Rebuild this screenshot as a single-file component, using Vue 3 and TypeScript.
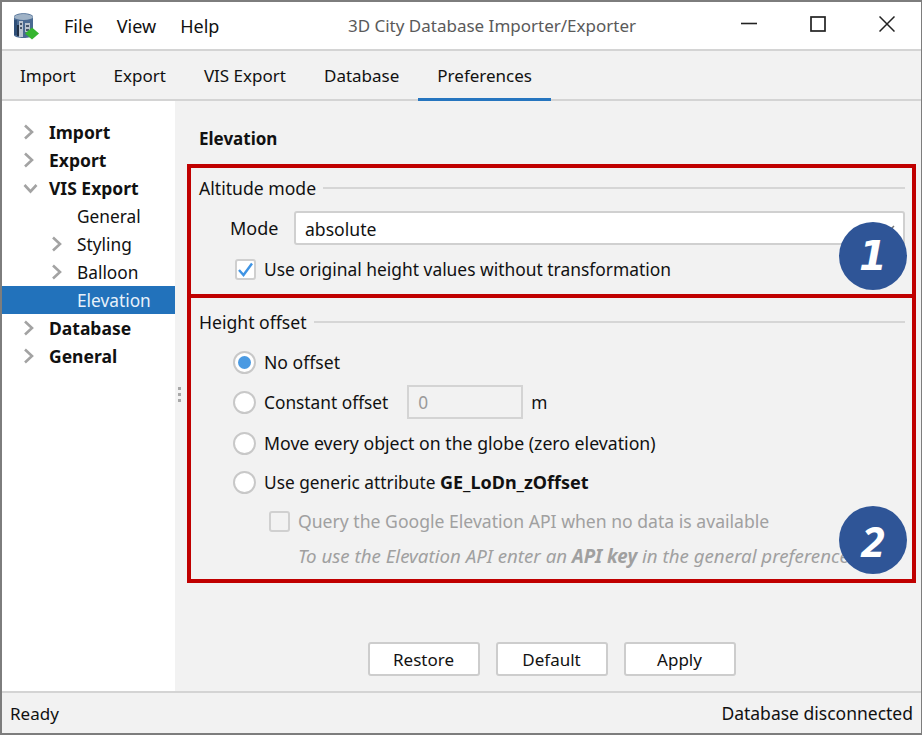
<script setup lang="ts">
interface TreeItem {
  label: string;
  level: number;
  arrow?: "right" | "down";
  selected?: boolean;
}

const menus = ["File", "View", "Help"];
const tabs = ["Import", "Export", "VIS Export", "Database", "Preferences"];
const activeTab = "Preferences";

const tree: TreeItem[] = [
  { label: "Import", level: 0, arrow: "right" },
  { label: "Export", level: 0, arrow: "right" },
  { label: "VIS Export", level: 0, arrow: "down" },
  { label: "General", level: 1 },
  { label: "Styling", level: 1, arrow: "right" },
  { label: "Balloon", level: 1, arrow: "right" },
  { label: "Elevation", level: 1, selected: true },
  { label: "Database", level: 0, arrow: "right" },
  { label: "General", level: 0, arrow: "right" },
];

const buttons = ["Restore", "Default", "Apply"];
</script>

<template>
  <div class="window">
    <header class="titlebar">
      <svg class="app-icon" width="26" height="27" viewBox="0 0 26 27">
        <path d="M0 4c0-5 19-5 19 0v18c0 4-19 4-19 0z" fill="#4a6a92" />
        <ellipse cx="9.500" cy="4" rx="9.500" ry="3" fill="#9fb2c6" />
        <path d="M0 7h3v15H0z" fill="#2f4f78" />
        <path d="M5 8h4v16H5zM11 10h5v9h-5z" fill="#b9c3cf" />
        <path d="M6 10h2v2H6zM6 14h2v2H6zM12 12h3v2h-3zM12 16h3v2h-3z" fill="#46566b" />
        <path d="M3 12h2v11H3z" fill="#1f2f45" />
        <path d="M11 20.500l7-6 7 6-7 6z" fill="#35b52f" />
      </svg>
      <nav class="menu">
        <span v-for="m in menus" :key="m">{{ m }}</span>
      </nav>
      <div class="title">3D City Database Importer/Exporter</div>
      <div class="controls">
        <svg width="16" height="16" viewBox="0 0 16 16"><path d="M0 7.500h16" stroke="#222" stroke-width="1.600" /></svg>
        <svg width="16" height="16" viewBox="0 0 16 16"><rect x="1" y="1" width="14" height="14" fill="none" stroke="#222" stroke-width="1.700" /></svg>
        <svg width="16" height="16" viewBox="0 0 16 16"><path d="M0.500 0.500l15 15M15.500 0.500l-15 15" stroke="#222" stroke-width="1.500" /></svg>
      </div>
    </header>

    <div class="tabs">
      <div v-for="t in tabs" :key="t" class="tab" :class="{ active: t === activeTab }">{{ t }}</div>
    </div>

    <div class="body">
      <aside class="tree">
        <div
          v-for="item in tree"
          :key="item.label + item.level"
          class="tree-row"
          :class="['level-' + item.level, { selected: item.selected }]"
        >
          <span class="twisty">
            <svg v-if="item.arrow === 'right'" width="11" height="16" viewBox="0 0 11 16">
              <path d="M2 1.500L9 8l-7 6.500" fill="none" stroke="#a3a3a3" stroke-width="2.600" />
            </svg>
            <svg v-else-if="item.arrow === 'down'" width="15" height="11" viewBox="0 0 15 11">
              <path d="M1.500 2L7.500 8.500 13.500 2" fill="none" stroke="#a3a3a3" stroke-width="2.600" />
            </svg>
          </span>
          <span>{{ item.label }}</span>
        </div>
      </aside>

      <div class="splitter"><i></i><i></i><i></i></div>

      <main class="content">
        <h1 class="heading">Elevation</h1>

        <section class="box first">
          <div class="group-title"><span>Altitude mode</span><hr /></div>
          <div class="mode-row">
            <label>Mode</label>
            <div class="combo">absolute
              <svg class="combo-arrow" width="12" height="8" viewBox="0 0 12 8"><path d="M1 1l5 5 5-5" fill="none" stroke="#777" stroke-width="1.500" /></svg>
            </div>
          </div>
          <div class="check-row">
            <span class="check">
              <svg width="17" height="15" viewBox="0 0 17 15"><path d="M2 8l4.500 5L15 1.500" fill="none" stroke="#3f94e4" stroke-width="2.400" /></svg>
            </span>
            Use original height values without transformation
          </div>
          <div class="badge one">1</div>
        </section>

        <section class="box second">
          <div class="group-title"><span>Height offset</span><hr /></div>
          <div class="radio-row r1"><span class="radio on"></span>No offset</div>
          <div class="radio-row r2">
            <span class="radio"></span>Constant offset
            <span class="num">0</span>
            <span class="unit">m</span>
          </div>
          <div class="radio-row r3"><span class="radio"></span>Move every object on the globe (zero elevation)</div>
          <div class="radio-row r4"><span class="radio"></span>Use generic attribute&nbsp;<b>GE_LoDn_zOffset</b></div>
          <div class="sub-check"><span class="check off"></span>Query the Google Elevation API when no data is available</div>
          <div class="hint">To use the Elevation API enter an <b>API key</b> in the general preferences.</div>
          <div class="badge two">2</div>
        </section>

        <div class="actions">
          <button v-for="b in buttons" :key="b" type="button">{{ b }}</button>
        </div>
      </main>
    </div>

    <footer class="status">
      <span>Ready</span>
      <span class="db-state">Database disconnected</span>
    </footer>
  </div>
</template>

<style scoped>
.window {
  width: 922px;
  height: 735px;
  box-sizing: border-box;
  border: 2px solid #7d7d7d;
  border-right-width: 1px;
  display: flex;
  flex-direction: column;
  background: #f2f2f2;
  color: #111;
  font-family: "Noto Sans", "Liberation Sans", sans-serif;
  font-size: 17px;
  overflow: hidden;
}

.titlebar {
  height: 47px;
  flex: none;
  display: flex;
  align-items: center;
  position: relative;
  background: #fff;
  border-bottom: 2px solid #d4d4d4;
}

.app-icon {
  margin-left: 12px;
  margin-top: 1px;
}

.menu {
  display: flex;
  gap: 24px;
  margin-left: 24px;
  font-size: 18px;
}

.title {
  position: absolute;
  left: 345px;
  width: 290px;
  text-align: center;
  color: #5a5a5a;
  white-space: nowrap;
}

.controls {
  margin-left: auto;
  margin-right: 26px;
  display: flex;
  gap: 53px;
  margin-top: -3px;
}

.tabs {
  height: 48px;
  flex: none;
  display: flex;
  border-bottom: 2px solid #d4d4d4;
}

.tab {
  padding: 0 19px;
  line-height: 50px;
  height: 48px;
  box-sizing: border-box;
}

.tab:first-child {
  margin-left: -1px;
}

.tab.active {
  border-bottom: 3px solid #2675bf;
  height: 50px;
}

.body {
  flex: 1;
  display: flex;
  min-height: 0;
}

.tree {
  width: 173px;
  flex: none;
  background: #fff;
  padding-top: 17px;
  box-sizing: border-box;
}

.tree-row {
  height: 28px;
  display: flex;
  align-items: center;
  white-space: nowrap;
}

.tree-row.level-0 {
  font-weight: 700;
  font-size: 17.500px;
  padding-left: 21px;
}

.tree-row.level-1 {
  font-size: 17.300px;
  padding-left: 49px;
}

.tree-row.selected {
  background: #2272bb;
  color: #e8f1fa;
}

.twisty {
  width: 26px;
  flex: none;
  display: flex;
  align-items: center;
}

.splitter {
  width: 8px;
  flex: none;
  display: flex;
  flex-direction: column;
  align-items: center;
  justify-content: center;
  gap: 3px;
  margin-top: -4px;
}

.splitter i {
  width: 3px;
  height: 3px;
  background: #a8a8a8;
}

.content {
  flex: 1;
  min-width: 0;
  padding: 0 5px 0 4px;
  display: flex;
  flex-direction: column;
  font-size: 17.600px;
}

.heading {
  font-size: 17px;
  font-weight: 700;
  margin: 0;
  padding: 26px 0 0 12px;
  line-height: 24px;
  height: 63px;
  box-sizing: border-box;
}

.box {
  position: relative;
  flex: none;
  border: 4px solid #c00000;
  box-sizing: border-box;
  padding: 0 7px 0 8px;
}

.box.first {
  height: 134px;
}

.box.second {
  height: 289px;
  margin-top: -4px;
}

.group-title {
  display: flex;
  align-items: center;
  gap: 7px;
  height: 24px;
  margin-top: 8px;
}

.box.second .group-title {
  margin-top: 12px;
}

.group-title hr {
  flex: 1;
  border: 0;
  border-top: 2px solid #d6d6d6;
  margin: 0;
}

.mode-row {
  display: flex;
  align-items: center;
  margin-top: 11px;
  padding-left: 31px;
}

.mode-row label {
  width: 64px;
  font-size: 18px;
}

.combo {
  flex: 1;
  position: relative;
  height: 34px;
  line-height: 32px;
  box-sizing: border-box;
  border: 2px solid #d0d0d0;
  border-radius: 3px;
  background: #fff;
  padding-left: 9px;
}

.combo-arrow {
  position: absolute;
  right: 8px;
  top: 12px;
}

.check-row {
  display: flex;
  align-items: center;
  gap: 8px;
  margin-top: 14px;
  padding-left: 36px;
  line-height: 21px;
  font-size: 17.400px;
}

.check {
  width: 21px;
  height: 21px;
  box-sizing: border-box;
  border: 2px solid #cfcfcf;
  border-radius: 3px;
  background: #fff;
  flex: none;
  display: flex;
  align-items: center;
  justify-content: center;
}

.check.off {
  background: #f2f2f2;
  border-color: #d0d0d0;
}

.radio-row {
  display: flex;
  align-items: center;
  padding-left: 34px;
  height: 24px;
  white-space: nowrap;
}

.r1 { margin-top: 16px; }
.r2 { margin-top: 16px; font-size: 17.300px; }
.r3 { margin-top: 17px; font-size: 17.700px; }
.r4 { margin-top: 15px; font-size: 17.300px; }

.r4 b {
  font-size: 18px;
}

.radio {
  width: 23px;
  height: 23px;
  box-sizing: border-box;
  border: 2px solid #c8c8c8;
  border-radius: 50%;
  background: #fff;
  margin-right: 8px;
  flex: none;
  display: flex;
  align-items: center;
  justify-content: center;
}

.radio.on::after {
  content: "";
  width: 13px;
  height: 13px;
  border-radius: 50%;
  background: #4a9ae2;
}

.num {
  width: 116px;
  height: 34px;
  line-height: 32px;
  box-sizing: border-box;
  border: 2px solid #d4d4d4;
  padding-left: 9px;
  color: #9a9a9a;
  margin-left: 19px;
  margin-top: -1px;
}

.unit {
  margin-left: 8px;
}

.sub-check {
  display: flex;
  align-items: center;
  gap: 8px;
  height: 24px;
  margin-top: 15px;
  padding-left: 70px;
  color: #a0a0a0;
  white-space: nowrap;
}

.hint {
  height: 24px;
  line-height: 24px;
  margin-top: 11px;
  padding-left: 99px;
  font-size: 18.700px;
  font-style: italic;
  color: #a0a0a0;
  white-space: nowrap;
  overflow: hidden;
}

.badge {
  position: absolute;
  right: 5px;
  width: 68px;
  height: 68px;
  border-radius: 50%;
  background: #2f5597;
  color: #fff;
  font-weight: 700;
  font-style: italic;
  display: flex;
  align-items: center;
  justify-content: center;
}

.badge.one {
  bottom: 4px;
  font-family: "DejaVu Sans", sans-serif;
  font-size: 40px;
}

.badge.two {
  bottom: 5px;
  font-family: "Open Sans", sans-serif;
  font-size: 42px;
}

.actions {
  display: flex;
  justify-content: center;
  gap: 16px;
  margin-top: 59px;
}

.actions button {
  width: 112px;
  height: 34px;
  box-sizing: border-box;
  border: 2px solid #cdcdcd;
  border-radius: 3px;
  background: #fff;
  color: #111;
  font-family: inherit;
  font-size: 17px;
  padding: 0;
}

.status {
  height: 40px;
  flex: none;
  display: flex;
  align-items: center;
  justify-content: space-between;
  padding: 0 8px;
  border-top: 2px solid #d4d4d4;
}

.db-state {
  font-size: 17.500px;
}
</style>

<style>
html,
body {
  margin: 0;
  background: #fff;
}
</style>
